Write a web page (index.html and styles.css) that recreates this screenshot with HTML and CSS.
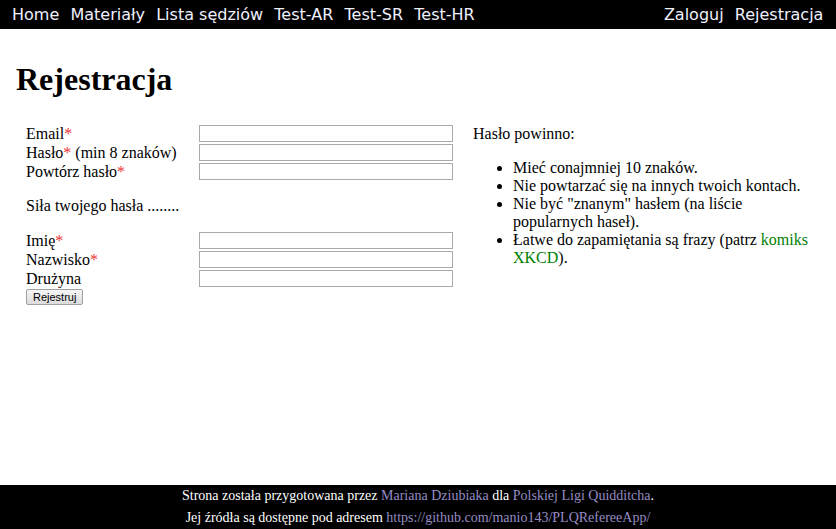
FILE: index.html
```html
<!DOCTYPE html>
<html lang="pl">
<head>
<meta charset="utf-8">
<title>Rejestracja</title>
<link rel="stylesheet" href="styles.css">
</head>
<body>
<nav class="topnav">
  <div class="nav-left">
    <a class="nav-link" href="#">Home</a>
    <a class="nav-link" href="#">Materiały</a>
    <a class="nav-link" href="#">Lista sędziów</a>
    <a class="nav-link" href="#">Test-AR</a>
    <a class="nav-link" href="#">Test-SR</a>
    <a class="nav-link" href="#">Test-HR</a>
  </div>
  <div class="nav-right">
    <a class="nav-link" href="#">Zaloguj</a>
    <a class="nav-link" href="#">Rejestracja</a>
  </div>
</nav>
<main class="content">
  <h1 class="title">Rejestracja</h1>
  <div class="columns">
    <form class="reg-form">
      <div class="fields">
        <label class="lbl">Email<span class="req">*</span></label><input class="inp" type="text">
        <label class="lbl">Hasło<span class="req">*</span> (min 8 znaków)</label><input class="inp" type="password">
        <label class="lbl">Powtórz hasło<span class="req">*</span></label><input class="inp" type="password">
      </div>
      <p class="strength">Siła twojego hasła ........</p>
      <div class="fields">
        <label class="lbl">Imię<span class="req">*</span></label><input class="inp" type="text">
        <label class="lbl">Nazwisko<span class="req">*</span></label><input class="inp" type="text">
        <label class="lbl">Drużyna</label><input class="inp" type="text">
      </div>
      <button class="btn" type="button">Rejestruj</button>
    </form>
    <div class="hints">
      <p class="hints-title">Hasło powinno:</p>
      <ul class="hint-list">
        <li>Mieć conajmniej 10 znaków.</li>
        <li>Nie powtarzać się na innych twoich kontach.</li>
        <li>Nie być "znanym" hasłem (na liście popularnych haseł).</li>
        <li>Łatwe do zapamiętania są frazy (patrz <a class="green-link" href="#">komiks XKCD</a>).</li>
      </ul>
    </div>
  </div>
</main>
<footer class="footer">
  <p class="foot-line">Strona została przygotowana przez <a class="foot-link" href="#">Mariana Dziubiaka</a> dla <a class="foot-link" href="#">Polskiej Ligi Quidditcha</a>.</p>
  <p class="foot-line">Jej źródła są dostępne pod adresem <a class="foot-link" href="#">https://github.com/manio143/PLQRefereeApp/</a></p>
</footer>
</body>
</html>
```
FILE: styles.css
```css
html, body {
  margin: 0;
  padding: 0;
}
body {
  font-family: "Liberation Serif", "Times New Roman", serif;
  font-size: 16px;
  color: #000;
  background: #fff;
  min-height: 100vh;
  display: flex;
  flex-direction: column;
}
.topnav {
  background: #000;
  height: 29px;
  display: flex;
  justify-content: space-between;
  align-items: center;
  padding: 0 7px 0 6.4px;
  font-family: "DejaVu Sans", sans-serif;
  font-size: 16px;
}
.nav-left, .nav-right {
  display: flex;
}
.nav-link {
  color: #f0f0ff;
  text-decoration: none;
  padding: 0 5.6px;
}
.content {
  flex: 1;
  padding: 0 16px;
}
.title {
  font-size: 32px;
  margin: 32px 0 27px;
  line-height: 37px;
}
.columns {
  display: grid;
  grid-template-columns: 437px 1fr;
  column-gap: 20px;
}
.reg-form {
  padding-left: 10px;
}
.fields {
  display: grid;
  grid-template-columns: 173px 254px;
  row-gap: 2px;
  align-items: center;
}
.lbl {
  line-height: 17px;
}
.req {
  color: #e33;
}
.inp {
  box-sizing: border-box;
  height: 17px;
  width: 254px;
  border: 1px solid #a9a9a9;
  padding: 0 2px;
  margin: 0;
  font-size: 12px;
}
.strength {
  margin: 17px 0 17px;
  line-height: 18px;
}
.btn {
  margin-top: 2px;
  font-family: "Liberation Sans", Arial, sans-serif;
  font-size: 11px;
  height: 16px;
  line-height: 12px;
  padding: 0 6px;
  border: 1px solid #a0a0a0;
  border-radius: 2px;
  background: linear-gradient(#f6f6f6, #dcdcdc);
  color: #000;
}
.hints-title {
  margin: 0 0 16px;
  line-height: 18px;
}
.hint-list {
  margin: 0;
  padding-left: 40px;
  line-height: 18px;
}
.green-link {
  color: #008000;
  text-decoration: none;
}
.footer {
  background: #000;
  color: #fff;
  text-align: center;
  font-size: 14px;
  padding: 0;
  height: 44px;
  display: flex;
  flex-direction: column;
  justify-content: center;
}
.foot-line {
  margin: 0;
  line-height: 22px;
}
.foot-link {
  color: #958dc4;
  text-decoration: none;
}
```
